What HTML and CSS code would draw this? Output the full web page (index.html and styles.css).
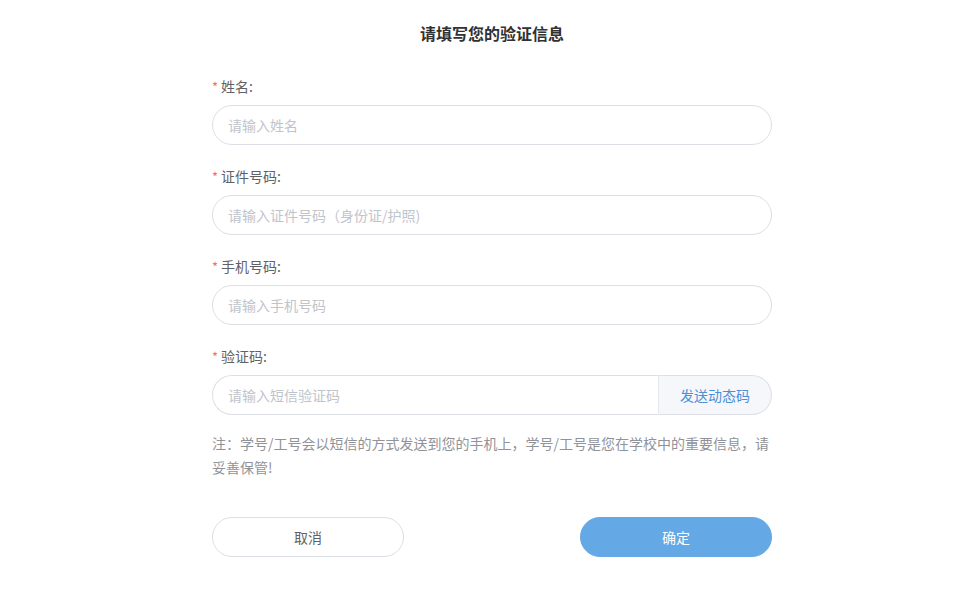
FILE: index.html
```html
<!DOCTYPE html>
<html lang="zh-CN">
<head>
<meta charset="utf-8">
<title>请填写您的验证信息</title>
<link rel="stylesheet" href="styles.css">
</head>
<body>
<div class="page">
  <h1 class="title">请填写您的验证信息</h1>
  <form class="form">
    <div class="item">
      <label class="label"><span class="req">*</span>姓名:</label>
      <input class="input" type="text" placeholder="请输入姓名">
    </div>
    <div class="item">
      <label class="label"><span class="req">*</span>证件号码:</label>
      <input class="input" type="text" placeholder="请输入证件号码（身份证/护照)">
    </div>
    <div class="item">
      <label class="label"><span class="req">*</span>手机号码:</label>
      <input class="input" type="text" placeholder="请输入手机号码">
    </div>
    <div class="item item-code">
      <label class="label"><span class="req">*</span>验证码:</label>
      <div class="group">
        <input class="input input-left" type="text" placeholder="请输入短信验证码">
        <button type="button" class="append">发送动态码</button>
      </div>
    </div>
    <p class="note">注：学号/工号会以短信的方式发送到您的手机上，学号/工号是您在学校中的重要信息，请妥善保管!</p>
    <div class="actions">
      <button type="button" class="btn btn-cancel">取消</button>
      <button type="button" class="btn btn-ok">确定</button>
    </div>
  </form>
</div>
</body>
</html>
```

FILE: styles.css
```css
html, body {
  margin: 0;
  padding: 0;
  background: #ffffff;
}
body {
  font-family: "Noto Sans CJK SC", "Noto Sans", sans-serif;
  color: #606266;
}
.page {
  width: 560px;
  margin-left: 212px;
  padding-top: 21px;
}
.title {
  margin: 0;
  font-size: 16px;
  line-height: 24px;
  font-weight: 700;
  color: #303133;
  text-align: center;
}
.form {
  margin-top: 31px;
}
.item {
  margin-bottom: 21px;
}
.item-code {
  margin-bottom: 16px;
}
.label {
  display: block;
  height: 20px;
  font-size: 14px;
  line-height: 20px;
  color: #606266;
  margin-bottom: 9px;
  overflow: hidden;
}
.req {
  color: #f56c6c;
  margin-right: 3px;
  font-size: 13px;
  line-height: 1;
}
.input {
  box-sizing: border-box;
  display: block;
  width: 100%;
  height: 40px;
  border: 1px solid #dcdfe6;
  border-radius: 20px;
  padding: 0 15px;
  font-family: inherit;
  font-size: 14px;
  color: #606266;
  background: #fff;
  outline: none;
}
.input::placeholder {
  color: #c0c4cc;
}
.group {
  display: flex;
  height: 40px;
}
.input-left {
  flex: 1;
  border-radius: 20px 0 0 20px;
}
.append {
  box-sizing: border-box;
  width: 114px;
  height: 40px;
  border: 1px solid #dcdfe6;
  border-left: 1px solid #e4e7ed;
  border-radius: 0 20px 20px 0;
  background: #f5f7fa;
  color: #4a8fd8;
  font-family: inherit;
  font-size: 14px;
  padding: 0;
  cursor: pointer;
}
.group .input-left {
  border-right: none;
}
.note {
  margin: 0;
  font-size: 14px;
  line-height: 24px;
  color: #909399;
}
.actions {
  display: flex;
  justify-content: space-between;
  margin-top: 38px;
}
.btn {
  box-sizing: border-box;
  width: 192px;
  height: 40px;
  border-radius: 20px;
  font-family: inherit;
  font-size: 14px;
  cursor: pointer;
}
.btn-cancel {
  background: #fff;
  border: 1px solid #dcdfe6;
  color: #606266;
}
.btn-ok {
  background: #64a8e6;
  border: 1px solid #64a8e6;
  color: #fff;
}
```
